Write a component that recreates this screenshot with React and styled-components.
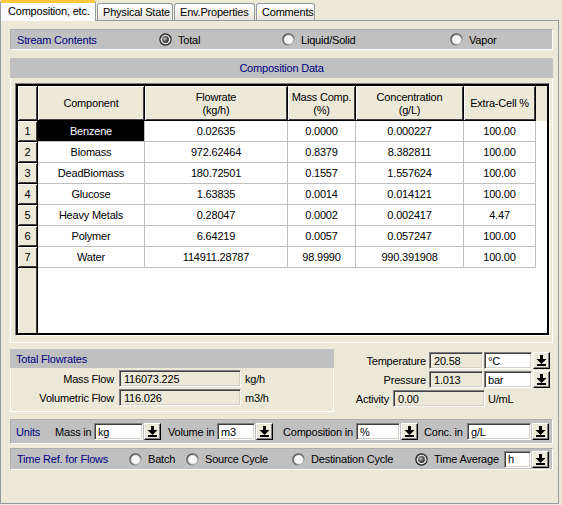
import React from 'react';
import styled, { createGlobalStyle } from 'styled-components';

const GlobalStyle = createGlobalStyle`
  html, body {
    margin: 0;
    padding: 0;
    background: #ece9d8;
  }
  body {
    font-family: "Liberation Sans", Arial, sans-serif;
    font-size: 11px;
    letter-spacing: -0.2px;
    color: #000;
  }
`;

const Window = styled.div`
  width: 562px;
  height: 505px;
  background: #ece9d8;
  overflow: hidden;
`;

const TabStrip = styled.div`
  display: flex;
  align-items: flex-end;
  height: 21px;
  position: relative;
  z-index: 1;
`;

const Tab = styled.div`
  box-sizing: border-box;
  height: ${(p) => (p.$active ? '21px' : '17px')};
  width: ${(p) => p.$w}px;
  margin-left: ${(p) => (p.$active ? 0 : 1)}px;
  margin-bottom: ${(p) => (p.$active ? 0 : 1)}px;
  padding-left: ${(p) => (p.$active ? 7 : 5)}px;
  border: 1px solid #919b9c;
  border-bottom: none;
  border-top: ${(p) => (p.$active ? '3px solid #ffc83c' : '1px solid #919b9c')};
  border-radius: 3px 3px 0 0;
  background: ${(p) =>
    p.$active ? '#fcfcfe' : 'linear-gradient(#ffffff, #f3f2ec 60%, #e6e4dc)'};
  display: flex;
  align-items: center;
  white-space: nowrap;
  padding-bottom: ${(p) => (p.$active ? 2 : 0)}px;
`;

const Panel = styled.div`
  box-sizing: border-box;
  width: 559px;
  height: 484px;
  margin-top: -1px;
  border: 1px solid #919b9c;
  padding: 8px 5px 0 9px;
  display: flex;
  flex-direction: column;
  background: #ece9d8;
`;

const GrayBar = styled.div`
  box-sizing: border-box;
  height: ${(p) => p.$h}px;
  margin-top: ${(p) => p.$mt || 0}px;
  background: #c0c0c0;
  border: 1px solid;
  border-color: #adadad #ffffff #ffffff #adadad;
  display: ${(p) => (p.$cols ? 'grid' : 'flex')};
  grid-template-columns: ${(p) => p.$cols || 'none'};
  align-items: center;
  padding-left: ${(p) => p.$pl}px;
`;

const BarTitle = styled.span`
  color: #000080;
  white-space: nowrap;
  width: ${(p) => (p.$w ? `${p.$w}px` : 'auto')};
  flex-shrink: 0;
`;

const RadioItem = styled.label`
  display: flex;
  align-items: center;
  gap: 6px;
  white-space: nowrap;

  svg {
    flex-shrink: 0;
  }
`;

const Group = styled.div`
  display: flex;
  flex-direction: column;
  margin-top: ${(p) => p.$mt || 0}px;
  width: ${(p) => (p.$w ? `${p.$w}px` : 'auto')};
  flex-shrink: 0;
`;

const GroupHeader = styled.div`
  height: ${(p) => p.$h}px;
  background: #c0c0c0;
  color: #000080;
  display: flex;
  align-items: center;
  justify-content: ${(p) => (p.$left ? 'flex-start' : 'center')};
  padding-left: ${(p) => (p.$left ? 6 : 0)}px;
`;

const GroupBody = styled.div`
  border: 1px solid #ffffff;
  border-top: none;
  padding: ${(p) => p.$pad};
  display: flex;
  flex-direction: column;
  gap: 2px;
`;

const GridFrame = styled.div`
  border: 1px solid;
  border-color: #808080 #ffffff #ffffff #808080;
`;

const Grid = styled.div`
  display: grid;
  grid-template-columns: 20px 107px 143px 68px 108px 72px 11px;
  grid-template-rows: 35px repeat(7, 21px) 65px;
  border: 2px solid #000;
  background: #ffffff;
`;

const HeadCell = styled.div`
  box-sizing: border-box;
  background: #ece9d8;
  border-right: 1px solid #000;
  border-bottom: 1px solid #000;
  box-shadow: inset 1px 1px 0 #ffffff, inset -1px -1px 0 #404040;
  display: flex;
  align-items: center;
  justify-content: center;
  text-align: center;
  line-height: 13px;
  padding-top: 1px;
`;

const HeadRest = styled.div`
  background: #ece9d8;
`;

const Cell = styled.div`
  box-sizing: border-box;
  border-right: 1px solid #c0c0c0;
  border-bottom: 1px solid #c0c0c0;
  background: ${(p) => (p.$selected ? '#000' : '#fff')};
  color: ${(p) => (p.$selected ? '#fff' : '#000')};
  display: flex;
  align-items: center;
  justify-content: center;
  white-space: nowrap;
`;

const RowEnd = styled.div`
  background: #fff;
`;

const RowHeadFill = styled.div`
  background: #ece9d8;
  border-right: 1px solid #000;
  box-shadow: inset 1px 0 0 #ffffff, inset -1px 0 0 #404040;
`;

const DataFill = styled.div`
  grid-column: 2 / -1;
  background: #fff;
`;

const BottomRow = styled.div`
  display: flex;
  margin-top: 6px;
`;

const FieldRow = styled.div`
  display: flex;
  align-items: center;
  height: 17px;
`;

const FieldLabel = styled.span`
  width: ${(p) => p.$w}px;
  margin-left: ${(p) => p.$ml || 0}px;
  margin-right: ${(p) => p.$mr || 0}px;
  text-align: ${(p) => (p.$right ? 'right' : 'left')};
  white-space: nowrap;
  flex-shrink: 0;
`;

const ReadBox = styled.div`
  box-sizing: border-box;
  width: ${(p) => p.$w}px;
  height: 17px;
  margin-right: ${(p) => p.$mr || 0}px;
  border: 1px solid;
  border-color: #808080 #ffffff #ffffff #808080;
  box-shadow: inset 1px 1px 0 #404040, inset -1px -1px 0 #d4d0c8;
  background: ${(p) => (p.$white ? '#ffffff' : '#ece9d8')};
  padding-left: ${(p) => (p.$white ? 3 : 4)}px;
  display: flex;
  align-items: center;
  flex-shrink: 0;
  white-space: nowrap;
`;

const DropButton = styled.div`
  box-sizing: border-box;
  width: 17px;
  height: 17px;
  margin-left: 1px;
  background: #ece9d8;
  border: 1px solid;
  border-color: #ffffff #000 #000 #ffffff;
  box-shadow: inset -1px -1px 0 #808080;
  display: flex;
  align-items: flex-start;
  justify-content: flex-start;
  flex-shrink: 0;
`;

const RightFields = styled.div`
  display: flex;
  flex-direction: column;
  gap: 2px;
  padding-top: 3px;
`;

const UnitField = styled.div`
  display: flex;
  align-items: center;
`;

const DropArrow = () => (
  <svg width="15" height="15" viewBox="0 0 15 15" shapeRendering="crispEdges">
    <rect x="6" y="2" width="3" height="4" fill="#000" />
    <polygon points="2.5,6 12.5,6 7.5,11" fill="#000" shapeRendering="geometricPrecision" />
    <rect x="3" y="11" width="9" height="2" fill="#000" />
  </svg>
);

const Radio = ({ checked }) => (
  <svg width="13" height="13" viewBox="0 0 13 13">
    <defs>
      <linearGradient id="rOuter" x1="0" y1="0" x2="1" y2="1">
        <stop offset="0" stopColor="#3a3a3a" />
        <stop offset="0.6" stopColor="#707070" />
        <stop offset="1" stopColor="#f0f0f0" />
      </linearGradient>
      <linearGradient id="rInner" x1="0" y1="0" x2="1" y2="1">
        <stop offset="0" stopColor="#909090" />
        <stop offset="1" stopColor="#e8e8e8" />
      </linearGradient>
      <radialGradient id="rDot" cx="0.4" cy="0.4" r="0.65">
        <stop offset="0" stopColor="#c8c8c8" />
        <stop offset="0.55" stopColor="#5a5a5a" />
        <stop offset="1" stopColor="#202020" />
      </radialGradient>
    </defs>
    <circle cx="6.5" cy="6.5" r="6.2" fill={checked ? '#1e1e1e' : 'url(#rOuter)'} />
    <circle cx="6.5" cy="6.5" r="5.1" fill="url(#rInner)" />
    <circle cx="6.5" cy="6.5" r="4.3" fill="#f6f6f6" />
    {checked && <circle cx="6.5" cy="6.5" r="3.4" fill="url(#rDot)" />}
  </svg>
);

const Select = ({ w, value }) => (
  <UnitField>
    <ReadBox $w={w} $white>{value}</ReadBox>
    <DropButton>
      <DropArrow />
    </DropButton>
  </UnitField>
);

const rows = [
  ['Benzene', '0.02635', '0.0000', '0.000227', '100.00'],
  ['Biomass', '972.62464', '0.8379', '8.382811', '100.00'],
  ['DeadBiomass', '180.72501', '0.1557', '1.557624', '100.00'],
  ['Glucose', '1.63835', '0.0014', '0.014121', '100.00'],
  ['Heavy Metals', '0.28047', '0.0002', '0.002417', '4.47'],
  ['Polymer', '6.64219', '0.0057', '0.057247', '100.00'],
  ['Water', '114911.28787', '98.9990', '990.391908', '100.00'],
];

const headers = [
  ['Component'],
  ['Flowrate', '(kg/h)'],
  ['Mass Comp.', '(%)'],
  ['Concentration', '(g/L)'],
  ['Extra-Cell %'],
];

export default function App() {
  return (
    <Window>
      <GlobalStyle />
      <TabStrip>
        <Tab $active $w={96}>Composition, etc.</Tab>
        <Tab $w={76}>Physical State</Tab>
        <Tab $w={81}>Env.Properties</Tab>
        <Tab $w={59}>Comments</Tab>
      </TabStrip>
      <Panel>
        <GrayBar $h={21} $pl={6} $cols="142px 123px 168px 1fr">
          <BarTitle>Stream Contents</BarTitle>
          <RadioItem><Radio checked />Total</RadioItem>
          <RadioItem><Radio />Liquid/Solid</RadioItem>
          <RadioItem><Radio />Vapor</RadioItem>
        </GrayBar>

        <Group $mt={8}>
          <GroupHeader $h={20}>Composition Data</GroupHeader>
          <GroupBody $pad="5px 2px 6px 4px">
            <GridFrame>
              <Grid>
                <HeadCell />
                {headers.map((h) => (
                  <HeadCell key={h[0]}>
                    {h.map((line, i) => (
                      <React.Fragment key={line}>
                        {i > 0 && <br />}
                        {line}
                      </React.Fragment>
                    ))}
                  </HeadCell>
                ))}
                <HeadRest />
                {rows.map((r, i) => (
                  <React.Fragment key={r[0]}>
                    <HeadCell>{i + 1}</HeadCell>
                    {r.map((v, j) => (
                      <Cell key={j} $selected={i === 0 && j === 0}>{v}</Cell>
                    ))}
                    <RowEnd />
                  </React.Fragment>
                ))}
                <RowHeadFill />
                <DataFill />
              </Grid>
            </GridFrame>
          </GroupBody>
        </Group>

        <BottomRow>
          <Group $w={324}>
            <GroupHeader $h={19} $left>Total Flowrates</GroupHeader>
            <GroupBody $pad="2px 0 5px 0">
              <FieldRow>
                <FieldLabel $w={103} $mr={5} $right>Mass Flow</FieldLabel>
                <ReadBox $w={122} $mr={4}>116073.225</ReadBox>
                <span>kg/h</span>
              </FieldRow>
              <FieldRow>
                <FieldLabel $w={103} $mr={5} $right>Volumetric Flow</FieldLabel>
                <ReadBox $w={122} $mr={4}>116.026</ReadBox>
                <span>m3/h</span>
              </FieldRow>
            </GroupBody>
          </Group>
          <RightFields>
            <FieldRow>
              <FieldLabel $w={92} $mr={3} $right>Temperature</FieldLabel>
              <ReadBox $w={54} $mr={1}>20.58</ReadBox>
              <ReadBox $w={48} $white>°C</ReadBox>
              <DropButton><DropArrow /></DropButton>
            </FieldRow>
            <FieldRow>
              <FieldLabel $w={92} $mr={3} $right>Pressure</FieldLabel>
              <ReadBox $w={54} $mr={1}>1.013</ReadBox>
              <ReadBox $w={48} $white>bar</ReadBox>
              <DropButton><DropArrow /></DropButton>
            </FieldRow>
            <FieldRow>
              <FieldLabel $w={55} $mr={4} $right>Activity</FieldLabel>
              <ReadBox $w={92} $mr={3}>0.00</ReadBox>
              <span>U/mL</span>
            </FieldRow>
          </RightFields>
        </BottomRow>

        <GrayBar $h={25} $pl={5} $mt={7}>
          <BarTitle $w={39}>Units</BarTitle>
          <FieldLabel $w={39}>Mass in</FieldLabel>
          <Select w={49} value="kg" />
          <FieldLabel $w={49} $ml={7}>Volume in</FieldLabel>
          <Select w={38} value="m3" />
          <FieldLabel $w={73} $ml={10}>Composition in</FieldLabel>
          <Select w={44} value="%" />
          <FieldLabel $w={43} $ml={6}>Conc. in</FieldLabel>
          <Select w={64} value="g/L" />
        </GrayBar>

        <GrayBar $h={22} $pl={6} $mt={4} $cols="112px 57px 106px 123px 89px 1fr">
          <BarTitle>Time Ref. for Flows</BarTitle>
          <RadioItem><Radio />Batch</RadioItem>
          <RadioItem><Radio />Source Cycle</RadioItem>
          <RadioItem><Radio />Destination Cycle</RadioItem>
          <RadioItem><Radio checked />Time Average</RadioItem>
          <Select w={27} value="h" />
        </GrayBar>
      </Panel>
    </Window>
  );
}
